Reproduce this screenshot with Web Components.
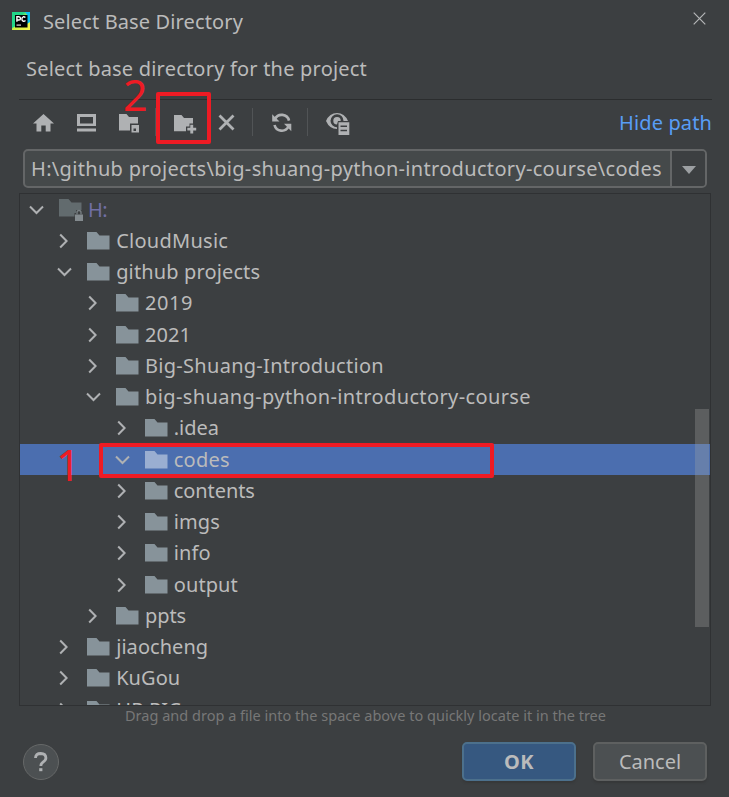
<!DOCTYPE html>
<html lang="en"><head><meta charset="utf-8"><title>Select Base Directory</title>
<style>html,body{margin:0;background:#3c3f41;overflow:hidden}</style></head>
<body><directory-dialog></directory-dialog>
<script>
const define=(name,html,init)=>customElements.define(name,class extends HTMLElement{
  connectedCallback(){ if(this.shadowRoot)return; const r=this.attachShadow({mode:'open'}); r.innerHTML=typeof html==='function'?html(this):html; if(init)init(this,r);} });

/* One line of text, tracked to a given width. */
define('fit-text','<style>:host{display:block;white-space:pre;flex:none}span{display:inline-block}</style><span><slot></slot></span>',(el,r)=>{
  const s=r.querySelector('span'),w=+el.getAttribute('w'),n=el.textContent.length;
  if(w){s.style.letterSpacing=((w-s.getBoundingClientRect().width)/n)+'px';}
});

const folder='<path d="M0 0H9.500L12.500 3.500H22.500V17.500H0Z"/>';
const icons={
 pycharm:[18,18,'<defs><linearGradient id="g" x1="0" y1="0" x2="1" y2="1"><stop offset=".35" stop-color="#21d789"/><stop offset=".5" stop-color="#c9ef45"/><stop offset="1" stop-color="#fcf84a"/></linearGradient></defs><path fill="url(#g)" d="M0 0H18V18H0Z"/><path fill="#07c3f2" d="M13 0H18V10L15 12V3Z"/><path fill="#21d789" d="M0 0H11L8 4H4V14L0 16Z"/><path fill="#000" d="M3 3H15.500V15.500H3Z"/><path fill="#ddd" d="M4.500 12.500H9V13.700H4.500Z"/><g fill="none" stroke="#fff" stroke-width="1.400"><path d="M4.900 9.800V4.800H6.800Q8.500 4.900 8.500 6.400T6.800 8H5"/><path d="M13.400 5.500Q12.400 4.600 11.300 4.800Q9.900 5.200 9.900 7.100T11.300 9.200Q12.500 9.400 13.500 8.500"/></g>'],
 close:[13,13,'<path d="M.7.7L12.300 12.300M12.300.7L.7 12.300" fill="none" stroke="#b5b7b8" stroke-width="1.200"/>'],
 home:[21,18,'<path d="M10.500 0L21 9.500H17.500V17.500H12.700V11.500H8.300V17.500H3.500V9.500H0Z"/>'],
 desktop:[19,18,'<path fill-rule="evenodd" d="M0 0H19V12H0ZM3 3V9.500H16V3ZM0 14.500H19V17.500H0Z"/>'],
 project:[21,20,'<path d="M0 0H7.500L10 3H19V9.500H11V16.500H0Z"/><path fill-rule="evenodd" d="M12.500 11H20V18.500H12.500ZM14.500 14.500V17H17V14.500Z"/>'],
 newfolder:[23,19,'<path d="M0 0H7.500L10 3H19V8.500H15.500V11.500H12V16.300H0Z"/><path d="M16.300 9.700H19.200V12.700H22.200V15.500H19.200V18.500H16.300V15.500H13.300V12.700H16.300Z"/>'],
 remove:[17,17,'<path d="M1.500 1.500L15.500 15.500M15.500 1.500L1.500 15.500" fill="none" stroke="#afb1b3" stroke-width="2.800"/>'],
 refresh:[20,19,'<g fill="none" stroke="#afb1b3" stroke-width="2.600"><path d="M3 6A7.500 7.500 0 0 1 17 7.600"/><path d="M2.500 12A7.500 7.500 0 0 0 16.500 13.500"/></g><path d="M.2 1.200V8.500H7.500ZM19.300 18.200V10.700H12Z"/>'],
 eye:[24,23,'<path fill-rule="evenodd" d="M0 8Q3.500 0 11 0T22 8H17.500A6.500 6.500 0 1 0 11 14.300V16Q3.500 16 0 8Z"/><path d="M11 11.500A3.700 3.700 0 1 1 14.700 8H12Z"/><path fill-rule="evenodd" d="M12.500 9.300H23.300V22H12.500ZM14.500 12.500V14H21V12.500ZM14.500 16.800V18.300H21V16.800Z"/>'],
 folder:[23,18,folder],
 locked:[24,22,'<path fill="#626b6e" d="M0 0H9.500L12.500 3.500H22.500V11H17V14H15.500V17.500H0Z"/><path fill="#848b8f" d="M16 15.500H24V22H16Z"/><path fill="none" stroke="#798084" stroke-width="1.300" d="M18 15.500V13.500Q18 11.500 20 11.500T22 13.500V15.500"/>'],
 right:[10,16,'<path d="M1.200 1.500L7.600 8L1.200 14.500" fill="none" stroke="#afb1b3" stroke-width="2"/>'],
 down:[15,10,'<path d="M1 1.500L7.500 8L14 1.500" fill="none" stroke="#afb1b3" stroke-width="2"/>'],
 arrow:[14,8,'<path d="M0 0H14L7 8Z"/>'],
 help:[14,20,'<path d="M1.500 6Q1.500 1.500 6.700 1.500Q11.900 1.700 11.900 6Q11.900 8.200 9 10.200Q6.800 11.800 6.800 14" fill="none" stroke="#afb1b3" stroke-width="2.800"/><path d="M5.200 16.200H8.400V19.200H5.200Z"/>']
};
define('ui-icon',el=>{const [w,h,p]=icons[el.getAttribute('name')];
 return `<style>:host{display:block;flex:none}svg{display:block;overflow:visible}</style><svg width="${w}" height="${h}" viewBox="0 0 ${w} ${h}" fill="currentColor">${p}</svg>`});

define('title-bar',`<style>:host{display:flex;height:42px;box-sizing:border-box;padding:9px 23px 0 12px;align-items:flex-start}
.i{margin-top:3px}.x{margin:3px 0 0 auto}fit-text{margin-left:13px;line-height:26px}</style><ui-icon class="i" name="pycharm"></ui-icon><fit-text w="200">Select Base Directory</fit-text><ui-icon class="x" name="close"></ui-icon>`);

define('tool-bar',`<style>:host{display:flex;height:49px;margin:0 17px 0 19px;border-top:1px solid #2b2d2e;box-sizing:border-box;color:#afb1b3}
i{width:1px;height:28px;background:#515456;margin-top:8px}ui-icon{margin-top:14px}
.link{color:#589df6;margin:10px 0 0 auto;line-height:26px}</style>
<ui-icon name="home" style="margin-left:14px"></ui-icon><ui-icon name="desktop" style="margin-left:23px"></ui-icon><ui-icon name="project" style="margin-left:23px"></ui-icon><i style="margin-left:15px"></i><ui-icon name="newfolder" style="margin-left:18px;margin-top:15px"></ui-icon><ui-icon name="remove" style="margin-left:21px"></ui-icon><i style="margin-left:17px"></i><ui-icon name="refresh" style="margin-left:19px;margin-top:13px"></ui-icon><i style="margin-left:15px"></i><ui-icon name="eye" style="margin-left:18px;margin-top:13px"></ui-icon><fit-text class="link" w="93">Hide path</fit-text>`);

define('path-box',`<style>:host{display:flex;box-sizing:border-box;width:684px;height:39px;margin:1px 0 0 23px;border:2px solid #646667;border-radius:5px;background:#45494a;overflow:hidden}
fit-text{padding-left:6px;line-height:35px;width:645px;box-sizing:border-box}
.a{flex:1;border-left:2px solid #646667;background:#3c3f41;color:#9c9fa2;display:flex;align-items:center;justify-content:center;padding-top:3px}</style><fit-text w="631">H:\\github projects\\big-shuang-python-introductory-course\\codes</fit-text><div class="a"><ui-icon name="arrow"></ui-icon></div>`);

define('tree-row',el=>{const d=+el.getAttribute('depth'),open=el.hasAttribute('open'),lock=el.hasAttribute('locked'),sel=el.hasAttribute('selected');
 return `<style>:host{display:flex;height:31.250px;flex:none;align-items:center;box-sizing:border-box;padding-left:${8+d*28.8-(d?.6:0)}px;${sel?'background:#4b6eaf;':''}}
.c{width:17px;display:flex;justify-content:center;margin-right:14px}.c ui-icon{margin-left:${open?0:-1}px}.f{color:${sel?'#9aaed1':'#87939a'};width:23px;margin-right:6px}fit-text{line-height:28px;${lock?'color:#716fa5':''}}</style><div class="c"><ui-icon name="${open?'down':'right'}"></ui-icon></div><ui-icon class="f" name="${lock?'locked':'folder'}"></ui-icon><fit-text w="${el.getAttribute('w')}">${el.getAttribute('label')}</fit-text>`});

const rows=[[0,'H:',19,'open locked'],[1,'CloudMusic',112,''],[1,'github projects',144,'open'],[2,'2019',48,''],[2,'2021',46,''],[2,'Big-Shuang-Introduction',239,''],[2,'big-shuang-python-introductory-course',386,'open'],[3,'.idea',45,''],[3,'codes',56,'open selected'],[3,'contents',81,''],[3,'imgs',46,''],[3,'info',37,''],[3,'output',64,''],[2,'ppts',41,''],[1,'jiaocheng',92,''],[1,'KuGou',64,''],[1,'HP PIC',65,'']];
define('file-tree',`<style>:host{display:flex;flex-direction:column;position:relative;width:692px;height:513px;box-sizing:border-box;margin:5px 0 0 19px;border:1px solid #2f3133;overflow:hidden}
.s{position:absolute;right:1px;top:215px;width:14px;height:218px;background:rgba(166,166,166,.31)}</style>${rows.map(([d,l,w,f])=>`<tree-row depth="${d}" label="${l}" w="${w}" ${f}></tree-row>`).join('')}<div class="s"></div>`);

define('dialog-button',`<style>:host{display:flex;box-sizing:border-box;width:114px;height:39px;border:2px solid #5e6060;border-radius:5px;background:#4c5052;justify-content:center;align-items:center;box-shadow:0 2px 2px #3338}
:host([primary]){background:#365880;border-color:#4c708c;font-weight:700}</style><slot></slot>`);

define('dialog-footer',`<style>:host{display:flex;padding:0 22px 0 23px;margin-top:17px;align-items:center}
.h{width:36px;height:36px;box-sizing:border-box;border:1px solid #666868;border-radius:50%;background:#4c5052;color:#afb1b3;display:flex;align-items:center;justify-content:center;margin-right:auto}dialog-button+dialog-button{margin-left:17px}</style><div class="h"><ui-icon name="help"></ui-icon></div><dialog-button primary><fit-text w="30">OK</fit-text></dialog-button><dialog-button><fit-text w="62">Cancel</fit-text></dialog-button>`);

/* Red annotation: a numbered frame over the dialog. */
define('call-out',el=>`<style>:host{position:absolute;box-sizing:border-box;border:4px solid #ee1b24;border-radius:2px}span{position:absolute;color:#ee1b24;font:43px/40px "Noto Sans",sans-serif;left:${el.getAttribute('nx')}px;top:${el.getAttribute('ny')}px}</style><span>${el.getAttribute('n')}</span>`);

define('directory-dialog',`<style>:host{display:block;position:relative;width:729px;height:797px;background:#3c3f41;color:#bbb;font:20px "Noto Sans",sans-serif;overflow:hidden}
.p{height:57px;padding:14px 0 0 26px;line-height:26px;box-sizing:border-box}.n{font-size:14.500px;line-height:20px;color:#777;margin:-1px 0 0 125px}</style>
<title-bar></title-bar><div class="p"><fit-text w="341">Select base directory for the project</fit-text></div><tool-bar></tool-bar><path-box></path-box><file-tree></file-tree>
<fit-text class="n" w="481">Drag and drop a file into the space above to quickly locate it in the tree</fit-text><dialog-footer></dialog-footer>
<call-out n="2" nx="-37" ny="-21" style="left:156px;top:92px;width:55px;height:52px"></call-out>
<call-out n="1" nx="-47" ny="-2" style="left:99px;top:443px;width:395px;height:35px"></call-out>`);
</script></body></html>
